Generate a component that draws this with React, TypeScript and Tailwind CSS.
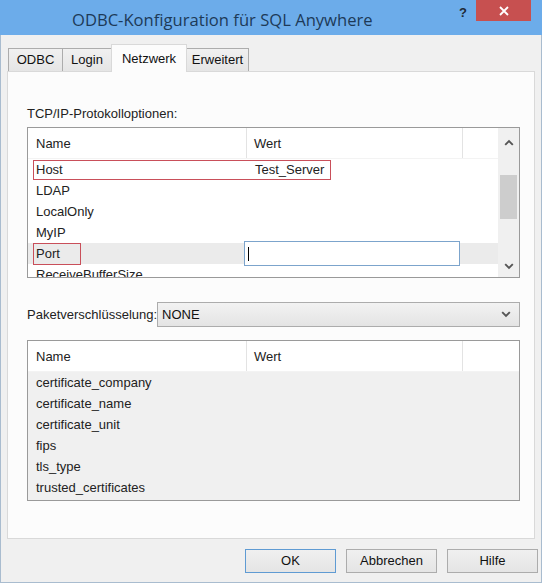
import React from "react";

function Chevron({ dir }: { dir: "up" | "down" }) {
  return (
    <svg width="10" height="7" viewBox="0 0 10 7">
      <path
        d={dir === "up" ? "M1.2 5.8 L5 2 L8.8 5.8" : "M1.2 1.2 L5 5 L8.8 1.2"}
        stroke="#555"
        strokeWidth="1.9"
        fill="none"
      />
    </svg>
  );
}

const rows1 = ["Host", "LDAP", "LocalOnly", "MyIP", "Port", "ReceiveBufferSize"];
const rows2 = [
  "certificate_company",
  "certificate_name",
  "certificate_unit",
  "fips",
  "tls_type",
  "trusted_certificates",
];

function Header() {
  return (
    <div className="flex h-[31px] shrink-0 bg-white text-[13px] text-[#222] leading-[31px] border-b border-[#f3f3f3]">
      <div className="w-[219px] pl-[8px] border-r border-[#e3e3e3]">Name</div>
      <div className="w-[216px] pl-[7px] border-r border-[#e3e3e3]">Wert</div>
      <div className="flex-1" />
    </div>
  );
}

function Tab({ label, w, active, first }: { label: string; w: string; active?: boolean; first?: boolean }) {
  if (active) {
    return (
      <div
        className={`${w} h-[28px] -ml-px bg-[#fcfcfc] border-t border-x border-[#d9d9d9] flex items-center justify-center text-[13px] text-[#111] relative z-10`}
      >
        {label}
      </div>
    );
  }
  return (
    <div
      className={`${w} h-[23px] mb-[1px] ${first ? "" : "-ml-px"} bg-gradient-to-b from-[#f0f0f0] to-[#e5e5e5] border-t border-x border-[#acacac] flex items-center justify-center text-[13px] text-[#111]`}
    >
      {label}
    </div>
  );
}

function Button({ label, def }: { label: string; def?: boolean }) {
  return (
    <div
      className={`w-[91px] h-[24px] border ${
        def ? "border-[#5f9bd3]" : "border-[#acacac]"
      } bg-gradient-to-b from-[#f0f0f0] to-[#e5e5e5] flex items-center justify-center text-[13px] text-[#111]`}
    >
      {label}
    </div>
  );
}

export default function App() {
  return (
    <div className="w-[542px] h-[583px] flex flex-col bg-[#f0f0f0] overflow-hidden font-['Liberation_Sans',Arial,sans-serif]">
      {/* Title bar */}
      <div className="h-[35px] shrink-0 bg-[#6caceA] flex items-start">
        <div className="flex-1 pl-[72px] pt-[7px] text-[16.6px] leading-[26px] text-[#1d3a58] font-['Open_Sans',sans-serif] whitespace-nowrap">
          ODBC-Konfiguration für SQL Anywhere
        </div>
        <div className="w-[10px] mr-[7px] pt-[5px] text-[13px] leading-[16px] font-bold text-[#1f2a36]">?</div>
        <div className="w-[55px] h-[21px] mr-[11px] bg-[#c75050] flex items-center justify-center">
          <svg width="10" height="10" viewBox="0 0 10 10">
            <path d="M1 1 L9 9 M9 1 L1 9" stroke="#fff" strokeWidth="1.8" />
          </svg>
        </div>
      </div>

      {/* Body */}
      <div className="flex-1 flex flex-col border-x border-b border-[#a9bccf] px-[6px] pt-[9px]">
        {/* Tabs */}
        <div className="flex items-end h-[28px] pl-[1px] relative z-10">
          <Tab label="ODBC" w="w-[55px]" first />
          <Tab label="Login" w="w-[50px]" />
          <Tab label="Netzwerk" w="w-[76px]" active />
          <Tab label="Erweitert" w="w-[63px]" />
        </div>

        {/* Panel */}
        <div className="-mt-px h-[468px] bg-[#fcfcfc] border border-[#d9d9d9] pl-[19px] pr-[14px] pt-[34px] flex flex-col">
          <div className="text-[13px] leading-[15px] text-[#222] mb-[6px]">TCP/IP-Protokolloptionen:</div>

          {/* List 1 */}
          <div className="h-[151px] border border-[#9a9a9a] flex bg-white">
            <div className="flex-1 flex flex-col overflow-hidden">
              <Header />
              {rows1.map((r) => (
                <div
                  key={r}
                  className={`relative flex shrink-0 h-[21px] text-[13px] leading-[21px] text-[#222] ${
                    r === "Port" ? "bg-[#ebebeb]" : ""
                  }`}
                >
                  <div className="w-[220px] pl-[8px] whitespace-nowrap">{r}</div>
                  <div className="pl-[7px]">{r === "Host" ? "Test_Server" : ""}</div>
                  {r === "Host" && (
                    <div className="absolute left-[5px] top-[1px] w-[298px] h-[20px] border border-[#c94f5a]" />
                  )}
                  {r === "Port" && (
                    <>
                      <div className="absolute left-[5px] top-0 w-[48px] h-[22px] border border-[#c94f5a]" />
                      <div className="absolute left-[216px] -top-[2px] w-[216px] h-[25px] border border-[#7ca4cc] bg-white flex items-center pl-[3px] z-10">
                        <div className="w-px h-[14px] bg-black" />
                      </div>
                    </>
                  )}
                </div>
              ))}
            </div>
            {/* Scrollbar */}
            <div className="w-[21px] shrink-0 bg-[#f0f0f0] flex flex-col">
              <div className="h-[28px] flex items-center justify-center">
                <Chevron dir="up" />
              </div>
              <div className="flex-1 px-[2px]">
                <div className="mt-[19px] h-[44px] bg-[#cdcdcd]" />
              </div>
              <div className="h-[22px] flex items-center justify-center">
                <Chevron dir="down" />
              </div>
            </div>
          </div>

          {/* Combo row */}
          <div className="mt-[24px] flex items-center h-[25px]">
            <div className="flex-1 text-[13px] text-[#222] whitespace-nowrap">Paketverschlüsselung:</div>
            <div className="w-[365px] h-[25px] border border-[#acacac] bg-gradient-to-b from-[#f2f2f2] to-[#e4e4e4] flex items-center pl-[4px] pr-[8px] text-[13px] text-[#111]">
              <div className="flex-1">NONE</div>
              <Chevron dir="down" />
            </div>
          </div>

          {/* List 2 */}
          <div className="mt-[13px] h-[161px] border border-[#9a9a9a] flex flex-col bg-[#f0f0f0]">
            <Header />
            {rows2.map((r) => (
              <div key={r} className="h-[21px] shrink-0 pl-[8px] text-[13px] leading-[21px] text-[#222]">
                {r}
              </div>
            ))}
          </div>
        </div>

        {/* Buttons */}
        <div className="mt-[10px] flex justify-end gap-[10px] -mr-[3px]">
          <Button label="OK" def />
          <Button label="Abbrechen" />
          <Button label="Hilfe" />
        </div>
      </div>
    </div>
  );
}
